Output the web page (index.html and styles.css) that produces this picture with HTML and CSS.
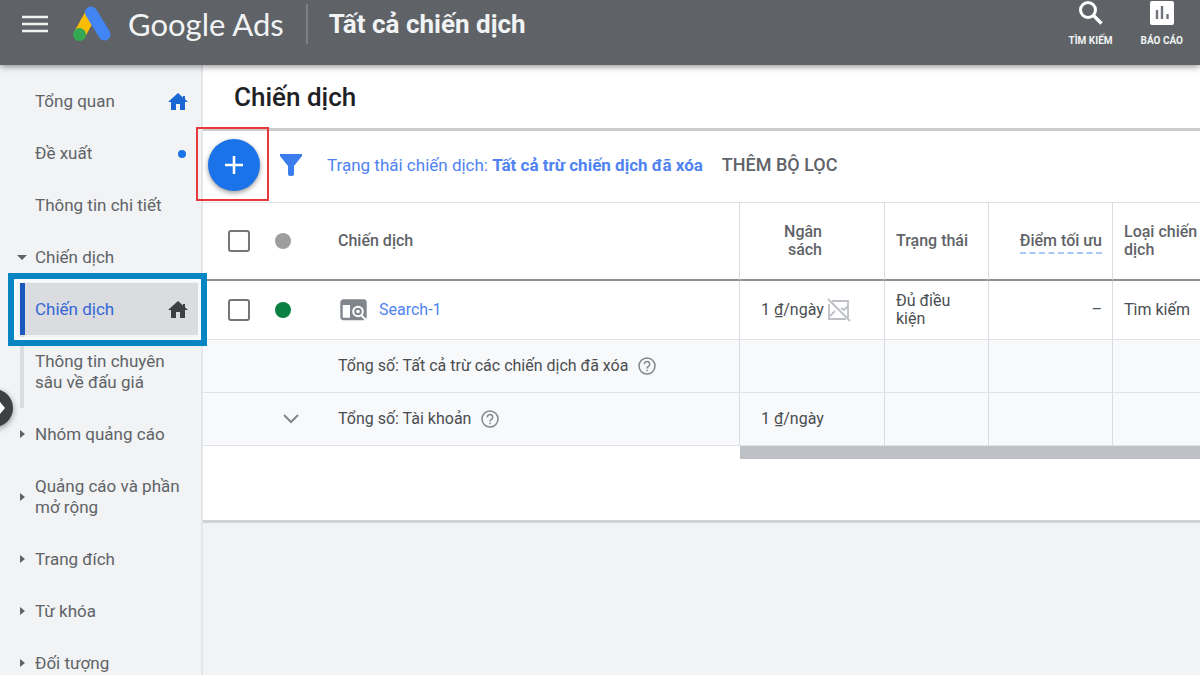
FILE: index.html
```html
<!DOCTYPE html>
<html lang="vi">
<head>
<meta charset="utf-8">
<meta name="viewport" content="width=device-width, initial-scale=1">
<title>Google Ads - Tất cả chiến dịch</title>
<link rel="stylesheet" href="styles.css">
</head>
<body>
<header class="topbar">
  <button class="icon-button menu" type="button" aria-label="Menu">
    <svg width="26" height="18" viewBox="0 0 26 18"><path d="M0 2h26M0 9h26M0 16h26" stroke="#f1f1f1" stroke-width="2.6"/></svg>
  </button>
  <a class="brand" href="#">
    <svg width="40" height="36" viewBox="0 0 40 36">
      <path d="M7.500 28.500L19 8" stroke="#fbbc04" stroke-width="12"/>
      <path d="M19 6.500L32.500 28.500" stroke="#4285f4" stroke-width="12" stroke-linecap="round"/>
      <circle cx="7.500" cy="28.500" r="6.500" fill="#34a853"/>
    </svg>
    <span class="brand-name">Google Ads</span>
  </a>
  <span class="scope">Tất cả chiến dịch</span>
  <nav class="tools" aria-label="Công cụ">
    <button class="tool" type="button">
      <svg width="26" height="26" viewBox="0 0 26 26" fill="none" stroke="#fff"><circle cx="10" cy="10" r="7.500" stroke-width="3"/><path d="M15.500 15.500l8 8" stroke-width="3.400"/></svg>
      <span>TÌM KIẾM</span>
    </button>
    <button class="tool" type="button">
      <svg width="26" height="26" viewBox="0 0 26 26"><rect x="1" y="1" width="24" height="24" rx="2" fill="#fff"/><path d="M8 10v9M13 6v13M18.500 14v5" stroke="#70747a" stroke-width="2.400"/></svg>
      <span>BÁO CÁO</span>
    </button>
  </nav>
</header>
<div class="shell">
  <nav class="sidebar" aria-label="Trang">
    <a class="item" href="#"><span>Tổng quan</span><svg class="mark" width="20" height="18" viewBox="0 0 20 18" fill="#1967d2"><path d="M10 0L0 9h3v8h5v-6h4v6h5V9h3l-3-2.700V3h-2v1.500z"/></svg></a>
    <a class="item" href="#"><span>Đề xuất</span><i class="dot-new"></i></a>
    <a class="item" href="#"><span>Thông tin chi tiết</span></a>
    <a class="item group open" href="#"><span>Chiến dịch</span></a>
    <div class="subnav">
      <a class="item selected" href="#" aria-current="page"><span>Chiến dịch</span><svg class="mark" width="20" height="18" viewBox="0 0 20 18" fill="#3c4043"><path d="M10 0L0 9h3v8h5v-6h4v6h5V9h3l-3-2.700V3h-2v1.500z"/></svg></a>
      <a class="item" href="#"><span>Thông tin chuyên sâu về đấu giá</span></a>
    </div>
    <a class="item group" href="#"><span>Nhóm quảng cáo</span></a>
    <a class="item group" href="#"><span>Quảng cáo và phần mở rộng</span></a>
    <a class="item group" href="#"><span>Trang đích</span></a>
    <a class="item group" href="#"><span>Từ khóa</span></a>
    <a class="item group" href="#"><span>Đối tượng</span></a>
    <button class="expander" type="button" aria-label="Mở rộng">
      <svg width="12" height="16" viewBox="0 0 12 16"><path d="M0 3.500h1V2l5 6-5 6v-1.500H0z" fill="#fff"/></svg>
    </button>
  </nav>
  <main class="content">
    <section class="panel">
      <h1 class="page-title">Chiến dịch</h1>
      <div class="filters">
        <div class="create">
          <button class="fab" type="button" aria-label="Tạo chiến dịch">
            <svg width="20" height="20" viewBox="0 0 20 20"><path d="M10 1v18M1 10h18" stroke="#fff" stroke-width="2.600"/></svg>
          </button>
        </div>
        <svg class="funnel" width="22" height="22" viewBox="0 0 22 22"><path d="M0 0h22v2L14 12v8q0 2-2 2h-2q-2 0-2-2v-8L0 2z" fill="#3b7ded"/></svg>
        <button class="filter" type="button">Trạng thái chiến dịch: <b>Tất cả trừ chiến dịch đã xóa</b></button>
        <button class="add-filter" type="button">THÊM BỘ LỌC</button>
      </div>
      <table class="grid">
        <colgroup><col class="c-check"><col class="c-dot"><col class="c-name"><col class="c-budget"><col class="c-status"><col class="c-score"><col class="c-type"></colgroup>
        <thead>
          <tr>
            <th class="check"><input type="checkbox" aria-label="Chọn tất cả"></th>
            <th class="state"><i class="status-dot"></i></th>
            <th>Chiến dịch</th>
            <th class="line budget-head">Ngân<br>sách</th>
            <th class="line">Trạng thái</th>
            <th class="line num"><span class="hint">Điểm tối ưu</span></th>
            <th class="line">Loại chiến dịch</th>
          </tr>
        </thead>
        <tbody>
          <tr class="row">
            <td class="check"><input type="checkbox" aria-label="Chọn Search-1"></td>
            <td class="state"><i class="status-dot on"></i></td>
            <td><div class="name">
              <svg width="28" height="22" viewBox="0 0 28 22"><rect x="1.500" y="1.500" width="24" height="18.500" rx="2" fill="#fff" stroke="#80868b" stroke-width="2.400"/><path d="M2 1h24v5H2zM10 5h16v15H10z" fill="#80868b"/><circle cx="18" cy="12.500" r="4.800" fill="#80868b" stroke="#fff" stroke-width="2"/><circle cx="18" cy="12.500" r="1.800" fill="#fff"/><path d="M21 16l6 6" stroke="#fff" stroke-width="2"/></svg>
              <a href="#">Search-1</a></div></td>
            <td class="line"><div class="budget">1 ₫/ngày
              <svg width="24" height="24" viewBox="0 0 24 24" fill="none" stroke="#bdc1c6" stroke-width="1.800"><path d="M5 3h16v17M2 6v15h17M1 1l22 22M3 18l5-5M14 10l3 2 4-4"/></svg></div></td>
            <td class="line">Đủ điều<br>kiện</td>
            <td class="line num">–</td>
            <td class="line">Tìm kiếm</td>
          </tr>
          <tr class="total">
            <td></td><td></td>
            <td><div class="sum">Tổng số: Tất cả trừ các chiến dịch đã xóa
              <svg width="18" height="18" viewBox="0 0 18 18" fill="none" stroke="#80868b" stroke-width="1.500"><circle cx="9" cy="9" r="8"/><path d="M6.300 7.200a2.700 2.700 0 1 1 4.200 2.200Q9 10.300 9 11.500M9 12.700v1.600"/></svg></div></td>
            <td class="line"></td><td class="line"></td><td class="line"></td><td class="line"></td>
          </tr>
          <tr class="total">
            <td></td>
            <td class="state"><svg class="chevron" width="16" height="10" viewBox="0 0 16 10"><path d="M1 1l7 7 7-7" fill="none" stroke="#80868b" stroke-width="2"/></svg></td>
            <td><div class="sum">Tổng số: Tài khoản
              <svg width="18" height="18" viewBox="0 0 18 18" fill="none" stroke="#80868b" stroke-width="1.500"><circle cx="9" cy="9" r="8"/><path d="M6.300 7.200a2.700 2.700 0 1 1 4.200 2.200Q9 10.300 9 11.500M9 12.700v1.600"/></svg></div></td>
            <td class="line"><div class="budget">1 ₫/ngày</div></td>
            <td class="line"></td><td class="line"></td><td class="line"></td>
          </tr>
        </tbody>
        <tfoot>
          <tr><td colspan="3"></td><td class="track" colspan="4"><div class="thumb"></div></td></tr>
        </tfoot>
      </table>
    </section>
  </main>
</div>
</body>
</html>
```

FILE: styles.css
```css
* { box-sizing: border-box; }

body {
  margin: 0;
  height: 100vh;
  overflow: hidden;
  display: flex;
  flex-direction: column;
  background: #f1f3f4;
  color: #5f6368;
  font-family: Roboto, "Noto Sans", sans-serif;
  font-size: 16px;
}

button {
  border: 0;
  padding: 0;
  background: none;
  color: inherit;
  font: inherit;
  cursor: pointer;
}

a { color: inherit; text-decoration: none; }
svg { display: block; flex: none; }

/* Top bar */
.topbar {
  position: relative;
  z-index: 2;
  flex: none;
  display: flex;
  align-items: flex-start;
  height: 65px;
  padding: 0 17px 0 22px;
  background: #5f6368;
  color: #f1f3f4;
  box-shadow: 0 2px 6px rgba(0, 0, 0, 0.4);
}

.menu { margin-top: 15px; }

.brand {
  display: flex;
  align-items: center;
  height: 48px;
  margin-left: 24px;
}

.brand-name {
  margin-left: 16px;
  font-family: Lato, Roboto, sans-serif;
  font-size: 31px;
  line-height: 48px;
}

.scope {
  margin: 4px 0 0 22px;
  padding-left: 21px;
  border-left: 2px solid #7d8186;
  font-size: 26px;
  font-weight: 700;
  line-height: 40px;
}

.tools {
  display: flex;
  gap: 28px;
  margin-left: auto;
}

.tool {
  display: flex;
  flex-direction: column;
  align-items: center;
  gap: 8px;
  font-size: 10px;
  font-weight: 700;
  line-height: 14px;
}

/* Layout */
.shell {
  flex: 1;
  min-height: 0;
  display: flex;
}

.sidebar {
  position: relative;
  flex: none;
  width: 203px;
  padding-top: 10px;
  border-right: 2px solid #e4e6e9;
  font-size: 17px;
  line-height: 21px;
}

.item {
  position: relative;
  display: flex;
  align-items: center;
  justify-content: space-between;
  min-height: 52px;
  padding: 16px 13px 15px 35px;
}

.group::before {
  content: "";
  position: absolute;
  left: 20px;
  top: calc(50% - 4px);
  border: solid transparent;
  border-width: 4px 0 4px 5px;
  border-left-color: #5f6368;
}

.group.open::before {
  left: 17px;
  top: calc(50% - 2px);
  border-width: 5px 5px 0;
  border-color: #5f6368 transparent transparent;
}

.dot-new {
  width: 8px;
  height: 8px;
  margin-right: 2px;
  border-radius: 50%;
  background: #1a73e8;
}

.subnav {
  margin-left: 20px;
  border-left: 4px solid #dadce0;
}

.subnav .item { padding-left: 11px; }

.selected {
  background: #dadce0;
  color: #3367d6;
}

.selected::before {
  content: "";
  position: absolute;
  inset: 0 auto 0 -4px;
  width: 5px;
  background: #185abc;
}

.selected::after {
  content: "";
  position: absolute;
  z-index: 3;
  inset: -10px -6px -11px -16px;
  border: 6px solid #0a85c4;
  box-shadow: inset 0 0 0 3px #f8f9fa;
  pointer-events: none;
}

.expander {
  position: absolute;
  left: -25px;
  top: 324px;
  width: 38px;
  height: 38px;
  padding-left: 24px;
  border-radius: 50%;
  background: #3c4043;
  box-shadow: 0 2px 6px rgba(0, 0, 0, 0.4);
}

.content { flex: 1; min-width: 0; }

.panel {
  padding-bottom: 61px;
  border-bottom: 3px solid #d0d2d3;
  background: #fff;
}

.page-title {
  margin: 0;
  padding: 1px 31px 0;
  border-bottom: 3px solid #ccc;
  color: #202124;
  font-size: 26px;
  font-weight: 500;
  line-height: 62px;
}

/* Filter bar */
.filters {
  display: flex;
  align-items: center;
  height: 71px;
  padding-bottom: 4px;
}

.create {
  position: relative;
  width: 58px;
  padding-left: 5px;
}

.create::after {
  content: "";
  position: absolute;
  inset: -12px -8px -10px -7px;
  border: 2px solid #e5383f;
  pointer-events: none;
}

.fab {
  display: grid;
  place-items: center;
  width: 52px;
  height: 52px;
  border-radius: 50%;
  background: #1a73e8;
  box-shadow: 0 2px 5px rgba(0, 0, 0, 0.4);
}

.funnel { margin-left: 19px; }

.filter {
  margin-left: 25px;
  color: #4f83f1;
  font-size: 17px;
}

.add-filter {
  margin-left: 19px;
  font-size: 18px;
  font-weight: 500;
}

/* Campaign table */
.grid {
  width: 100%;
  table-layout: fixed;
  border-collapse: separate;
  border-spacing: 0;
  line-height: 18px;
}

.c-check { width: 64px; }
.c-dot { width: 70px; }
.c-budget { width: 145px; }
.c-status { width: 104px; }
.c-score { width: 124px; }
.c-type { width: 88px; }

.grid th,
.grid td {
  padding: 0 0 0 1px;
  border-bottom: 1px solid #e0e2e5;
  text-align: left;
  vertical-align: middle;
}

.grid th {
  height: 79px;
  border-top: 1px solid #e0e2e5;
  border-bottom: 2px solid #8d9096;
  font-weight: 500;
}

.grid .line {
  padding-left: 11px;
  border-left: 1px solid #dadce0;
}

.grid .check { padding-left: 25px; }
.grid .state { padding-left: 8px; }

.grid .num {
  padding-right: 10px;
  text-align: right;
}

.grid .budget-head {
  padding-right: 62px;
  text-align: right;
}

.hint {
  padding-bottom: 2px;
  border-bottom: 2px dashed #a9c7f7;
}

.row td { height: 59px; color: #4a4d51; }
.total td { height: 53px; background: #f8f9fa; color: #4a4d51; }

.grid input {
  display: block;
  appearance: none;
  width: 22px;
  height: 22px;
  margin: 0;
  border: 2px solid #757575;
  border-radius: 3px;
}

.status-dot {
  display: block;
  width: 16px;
  height: 16px;
  border-radius: 50%;
  background: #9e9e9e;
}

.status-dot.on { background: #0b8043; }
.chevron { margin-left: 8px; }

.name,
.sum,
.budget {
  display: flex;
  align-items: center;
}

.name { gap: 11px; padding-left: 2px; }
.name a { color: #4f83f1; }
.sum { gap: 10px; }
.budget { gap: 3px; padding-left: 10px; }

.grid tfoot td {
  padding: 0;
  border: 0;
}

.thumb {
  height: 13px;
  margin-left: 1px;
  background: #bdc1c6;
}
```
